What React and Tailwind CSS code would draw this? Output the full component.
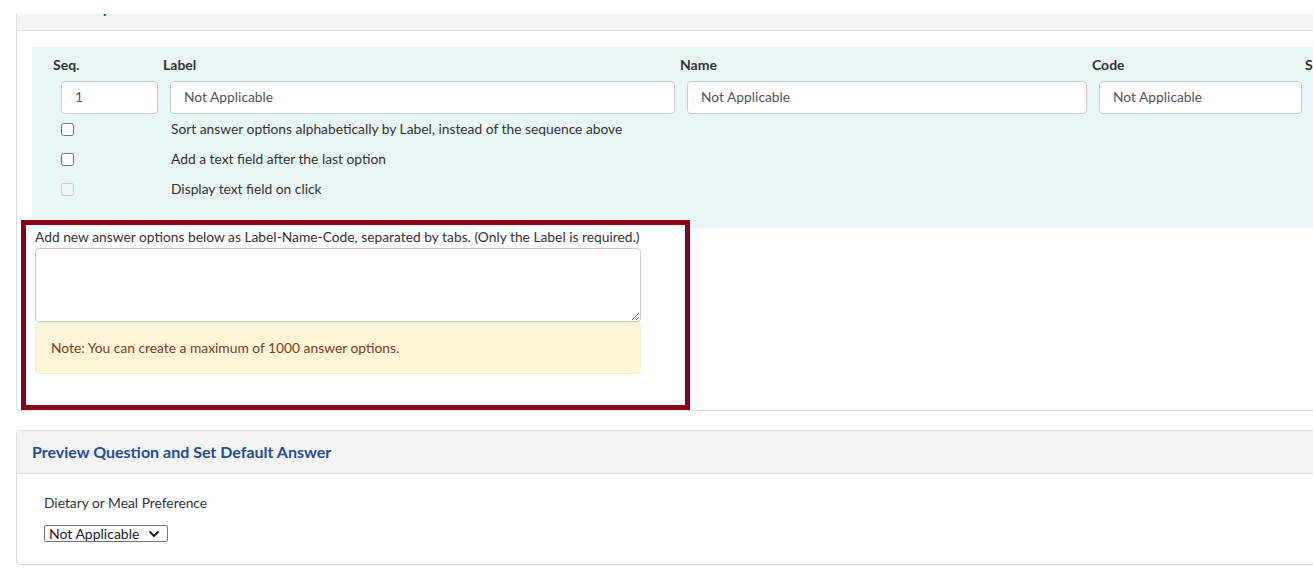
import React from 'react';
import { ChevronDown } from 'lucide-react';

const Heading = ({ w, children }) => (
  <div className={`${w} shrink-0 text-[14px] font-bold text-[#333]`}>{children}</div>
);

const Field = ({ w, value }) => (
  <div className={`${w} shrink-0 h-[33px] bg-white border border-[#ccc] rounded-[4px] flex items-center px-[13px] text-[13.8px] text-[#555]`}>
    {value}
  </div>
);

const CheckRow = ({ label, disabled }) => (
  <div className="h-[30px] flex items-center pl-[29px]">
    <div className="w-[110px] shrink-0 flex items-center">
      <input type="checkbox" disabled={disabled} className="w-[13px] h-[13px] m-0" />
    </div>
    <span className="text-[13.8px] text-[#333]">{label}</span>
  </div>
);

const App = () => {
  return (
    <div className="relative w-[1313px] h-[571px] overflow-hidden bg-white font-['Lato','Open_Sans',sans-serif]">
      <div className="h-[14px]" />

      {/* Answer options card */}
      <div className="ml-4 w-[1320px] border-x border-b border-[#ddd] rounded-b-[4px]">
        <div className="h-[17px] bg-[#f4f4f4] border-b border-[#ddd] overflow-hidden">
          <div className="-mt-[19px] pl-[15px] text-[16px] leading-[24px] font-bold text-[#1f4e9c]">Answer Options</div>
        </div>

        <div className="pt-4 pl-[15px] pb-[36px]">
          <div className="bg-[#e8f6f6] pt-[7px] pb-[24px]">
            <div className="flex pl-[21px] h-[20px] items-center">
              <Heading w="w-[110px]">Seq.</Heading>
              <Heading w="w-[517px]">Label</Heading>
              <Heading w="w-[412px]">Name</Heading>
              <Heading w="w-[213px]">Code</Heading>
              <Heading w="w-[40px]">Sort</Heading>
            </div>
            <div className="flex gap-3 pl-[29px] mt-[7px]">
              <Field w="w-[97px]" value="1" />
              <Field w="w-[505px]" value="Not Applicable" />
              <Field w="w-[400px]" value="Not Applicable" />
              <Field w="w-[203px]" value="Not Applicable" />
            </div>
            <CheckRow label="Sort answer options alphabetically by Label, instead of the sequence above" />
            <CheckRow label="Add a text field after the last option" />
            <CheckRow label="Display text field on click" disabled />
          </div>

          <div className="ml-[3px]">
            <div className="text-[13.8px] leading-[18px] text-[#333]">
              Add new answer options below as Label-Name-Code, separated by tabs. (Only the Label is required.)
            </div>
            <textarea
              readOnly
              className="block mt-[2px] w-[606px] h-[74px] border border-[#ccc] rounded-[4px] bg-white outline-none"
            />
            <div className="w-[606px] h-[52px] bg-[#fdf5d8] border border-[#faebcc] rounded-[4px] flex items-center px-[15px] text-[13.8px] text-[#7f3d1c]">
              Note: You can create a maximum of 1000 answer options.
            </div>
          </div>
        </div>
      </div>

      {/* Preview card */}
      <div className="ml-4 mt-[19px] w-[1320px] border border-[#ddd] rounded-[4px]">
        <div className="h-[43px] bg-[#f4f4f4] border-b border-[#ddd] rounded-t-[4px] flex items-center pl-[15px]">
          <span className="text-[16px] font-bold text-[#1f4e9c]">Preview Question and Set Default Answer</span>
        </div>
        <div className="pl-[27px] pt-[19px] pb-[22px]">
          <div className="text-[13.8px] leading-[20px] text-[#333]">Dietary or Meal Preference</div>
          <div className="mt-3 flex w-fit items-center h-[17px] border border-[#767676] rounded-[2px] pl-1 pr-[5px] gap-[7px] text-[14px] leading-[15px] text-[#222]">
            <span>Not Applicable</span>
            <ChevronDown size={16} strokeWidth={3} />
          </div>
        </div>
      </div>

      {/* highlight frame */}
      <div className="absolute left-[21px] top-[220px] w-[669px] h-[190px] border-[5px] border-[#8a0019] pointer-events-none" />
    </div>
  );
};

export default App;
